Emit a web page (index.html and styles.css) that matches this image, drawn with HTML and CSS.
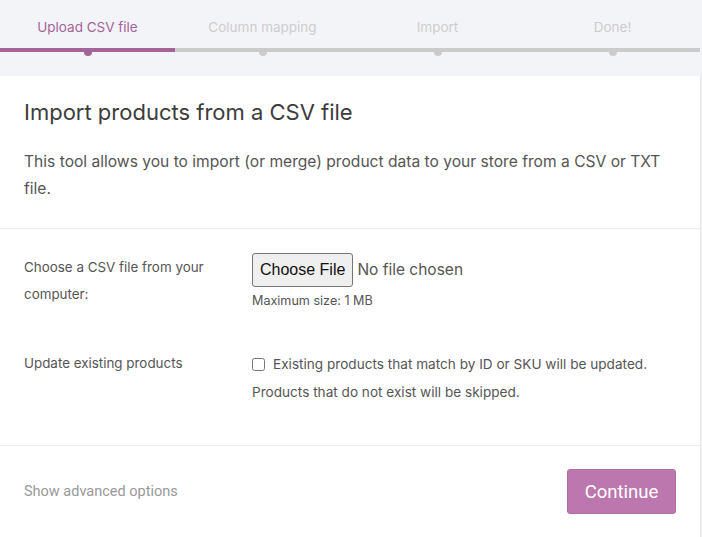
FILE: index.html
```html
<!DOCTYPE html>
<html lang="en">
<head>
    <meta charset="UTF-8">
    <meta name="viewport" content="width=device-width, initial-scale=1.0">
    <title>Product Import</title>
    <link rel="stylesheet" href="styles.css">
</head>
<body>
    <div class="importer">
        <!-- Progress steps -->
        <ol class="steps">
            <li class="step active">Upload CSV file</li>
            <li class="step">Column mapping</li>
            <li class="step">Import</li>
            <li class="step">Done!</li>
        </ol>

        <!-- Upload card -->
        <form class="import-card">
            <header class="card-header">
                <h2>Import products from a CSV file</h2>
                <p>This tool allows you to import (or merge) product data to your store from a CSV or TXT file.</p>
            </header>

            <section class="card-body">
                <div class="form-row">
                    <label class="row-label" for="upload">Choose a CSV file from your computer:</label>
                    <div class="row-field">
                        <input type="file" id="upload" class="file-input">
                        <small class="hint">Maximum size: 1 MB</small>
                    </div>
                </div>
                <div class="form-row">
                    <label class="row-label" for="update">Update existing products</label>
                    <div class="row-field">
                        <label class="check"><input type="checkbox" id="update"> Existing products that match by ID or SKU will be updated.</label>
                        <p class="note">Products that do not exist will be skipped.</p>
                    </div>
                </div>
            </section>

            <footer class="card-actions">
                <a href="#" class="advanced-link">Show advanced options</a>
                <button type="button" class="continue-btn">Continue</button>
            </footer>
        </form>
    </div>
</body>
</html>
```

FILE: styles.css
```css
* {
    box-sizing: border-box;
    margin: 0;
    padding: 0;
}

body {
    background-color: #f3f4f8;
    font-family: Inter, "Noto Sans", sans-serif;
    color: #555;
}

.importer {
    width: 701px;
}

/* Progress steps */
.steps {
    list-style: none;
    display: flex;
    width: 700px;
    padding-top: 17px;
}

.step {
    position: relative;
    flex: 1;
    text-align: center;
    font-size: 13.5px;
    line-height: 20px;
    color: #cdcdcd;
    padding-bottom: 11px;
    border-bottom: 4px solid #cbcbcb;
}

.step::after {
    content: "";
    position: absolute;
    left: 50%;
    bottom: -8px;
    width: 8px;
    height: 8px;
    margin-left: -4px;
    border-radius: 50%;
    background: #cbcbcb;
}

.step.active {
    color: #a46497;
    border-bottom-color: #a46497;
}

.step.active::after {
    background: #a46497;
}

/* Card */
.import-card {
    margin-top: 24px;
    background: #fff;
    border-right: 1px solid #e6e6ea;
}

.card-header {
    padding: 22px 24px 26px;
    border-bottom: 1px solid #ececec;
}

.card-header h2 {
    font-size: 22px;
    font-weight: 400;
    color: #3c3c3c;
    line-height: 28px;
    margin-bottom: 22px;
}

.card-header p {
    font-size: 15.6px;
    line-height: 27px;
}

.card-body {
    padding: 24px 24px 15px;
    border-bottom: 1px solid #ececec;
}

.form-row {
    display: flex;
    margin-bottom: 39px;
}

.form-row:last-child {
    margin-bottom: 28px;
}

.row-label {
    width: 228px;
    padding-right: 20px;
    font-size: 13.4px;
    line-height: 27px;
    padding-top: 1px;
}

.row-field {
    flex: 1;
}

.file-input {
    display: block;
    font-family: Inter, sans-serif;
    font-size: 15.5px;
    color: #555;
}

.file-input::file-selector-button {
    font-family: "Liberation Sans", Arial, sans-serif;
    font-size: 16px;
    color: #111;
    background: #efefef;
    border: 1px solid #767676;
    border-radius: 3px;
    height: 34px;
    padding: 0 7px;
    margin-right: 4px;
}

.hint {
    display: block;
    font-size: 12.6px;
    line-height: 18px;
    margin-top: 5px;
}

.check {
    display: flex;
    align-items: center;
    font-size: 13.6px;
    line-height: 20px;
    margin-top: 5px;
}

.check input {
    width: 13px;
    height: 13px;
    margin: 0 8px 0 0;
}

.note {
    font-size: 13.6px;
    line-height: 20px;
    margin-top: 8px;
}

/* Footer */
.card-actions {
    display: flex;
    justify-content: space-between;
    align-items: center;
    padding: 23px 24px 40px;
}

.advanced-link {
    font-family: Roboto, sans-serif;
    font-size: 14.5px;
    color: #999;
    text-decoration: none;
}

.continue-btn {
    font-family: Roboto, sans-serif;
    font-size: 18.5px;
    color: #fff;
    background: #bb77ae;
    border: 1px solid #b06fa4;
    border-radius: 3px;
    width: 109px;
    height: 45px;
    cursor: pointer;
}
```
